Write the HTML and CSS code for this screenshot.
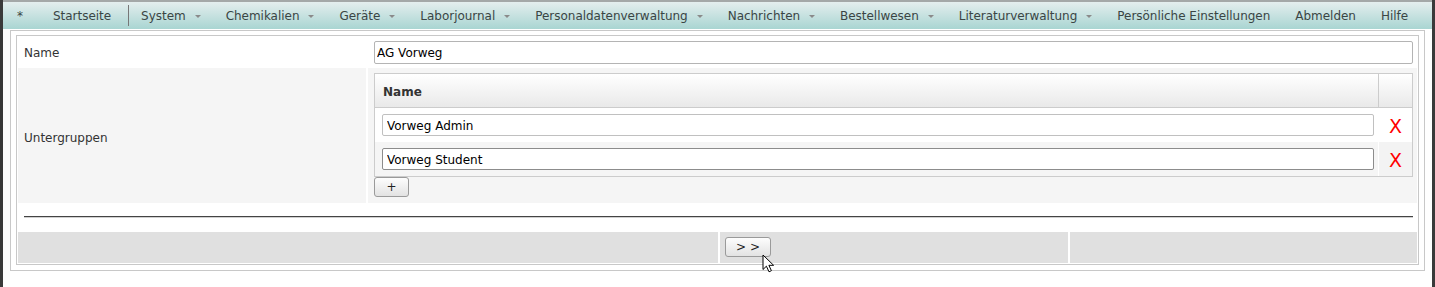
FILE: index.html
```html
<!DOCTYPE html>
<html lang="de">
<head>
  <meta charset="UTF-8">
  <title>Gruppe bearbeiten</title>
  <link rel="stylesheet" href="styles.css">
</head>
<body>

  <div class="frame">

    <!-- Hauptmenü -->
    <nav class="menu">
      <a class="menu-star">*</a>
      <a class="menu-item">Startseite</a>
      <span class="menu-sep"></span>
      <a class="menu-item">System<span class="caret"></span></a>
      <a class="menu-item">Chemikalien<span class="caret"></span></a>
      <a class="menu-item">Geräte<span class="caret"></span></a>
      <a class="menu-item">Laborjournal<span class="caret"></span></a>
      <a class="menu-item">Personaldatenverwaltung<span class="caret"></span></a>
      <a class="menu-item">Nachrichten<span class="caret"></span></a>
      <a class="menu-item">Bestellwesen<span class="caret"></span></a>
      <a class="menu-item">Literaturverwaltung<span class="caret"></span></a>
      <a class="menu-item">Persönliche Einstellungen</a>
      <a class="menu-item">Abmelden</a>
      <a class="menu-item">Hilfe</a>
    </nav>

    <!-- Formular -->
    <div class="panel">
      <form class="panel-inner">

        <div class="field-row">
          <label class="field-label" for="groupName">Name</label>
          <div class="field-value">
            <input class="text" id="groupName" type="text" value="AG Vorweg">
          </div>
        </div>

        <div class="field-row alt">
          <div class="field-label middle">Untergruppen</div>
          <div class="field-value">
            <table class="subtable">
              <thead>
                <tr>
                  <th>Name</th>
                  <th class="col-del"></th>
                </tr>
              </thead>
              <tbody>
                <tr>
                  <td><input class="text sub" type="text" value="Vorweg Admin"></td>
                  <td class="col-del"><a class="del">X</a></td>
                </tr>
                <tr class="alt">
                  <td><input class="text sub focus" type="text" value="Vorweg Student"></td>
                  <td class="col-del"><a class="del">X</a></td>
                </tr>
              </tbody>
            </table>
            <button type="button" class="btn btn-add">+</button>
          </div>
        </div>

        <div class="rule-row"><hr></div>

        <div class="actions">
          <div class="action-cell"></div>
          <div class="action-cell"><button type="button" class="btn btn-next">&gt; &gt;</button></div>
          <div class="action-cell"></div>
        </div>

      </form>
    </div>
  </div>

  <!-- Mauszeiger -->
  <svg class="cursor" width="14" height="20" viewBox="0 0 14 20">
    <path d="M1 1 L1 15.5 L4.4 12.2 L7 17.8 L9.4 16.7 L6.9 11.3 L11.6 11.3 Z" fill="#fff" stroke="#000" stroke-width="1" stroke-linejoin="round"/>
  </svg>

</body>
</html>
```

FILE: styles.css
```css
* {
  box-sizing: border-box;
}

html, body {
  margin: 0;
  height: 100%;
  overflow: hidden;
  background: #fff;
  font-family: "DejaVu Sans", Verdana, sans-serif;
  font-size: 12px;
  color: #333;
}

.frame {
  height: 100%;
  border-left: 3px solid #3a3a3a;
  border-right: 3px solid #3a3a3a;
}

/* Menü */
.menu {
  display: flex;
  height: 29px;
  padding-top: 2px;
  border-top: 2px solid #a4a8a8;
  background: linear-gradient(#e4eeee, #a9d5d2);
  line-height: 25px;
  white-space: nowrap;
}

.menu a {
  color: #3a4545;
  text-decoration: none;
  cursor: pointer;
}

.menu-star {
  padding: 0 17.5px 0 14px;
  color: #888;
}

.menu-item {
  padding: 0 12.5px;
  letter-spacing: -0.03px;
}

.menu-sep {
  width: 1px;
  height: 21px;
  margin: 1px 0 0 4px;
  background: #777;
}

.caret {
  display: inline-block;
  width: 0;
  height: 0;
  margin-left: 9px;
  border-left: 3.5px solid transparent;
  border-right: 3.5px solid transparent;
  border-top: 3px solid #8a8a8a;
  vertical-align: middle;
}

/* Rahmen */
.panel {
  margin: 1px 7px 0 7px;
  padding: 4px 5px 5px 5px;
  border: 1px solid #c8c8c8;
}

.panel-inner {
  display: flex;
  flex-direction: column;
  gap: 2px;
  margin: 0;
  padding: 1px;
  border: 1px solid #c8c8c8;
}

.field-row {
  display: grid;
  grid-template-columns: 348px 1fr;
  column-gap: 2px;
}

.field-row.alt .field-label,
.field-row.alt .field-value {
  background: #f5f5f5;
}

.field-label {
  padding: 5px 6px 1px;
  line-height: 23px;
}

.field-label.middle {
  display: flex;
  align-items: center;
  padding-top: 5px;
  padding-bottom: 0;
}

.field-value {
  padding: 4px 4px 2px 6px;
}

.field-row.alt .field-value {
  padding: 5px 4px 6px 6px;
}

input.text {
  display: block;
  width: 100%;
  height: 23px;
  margin: 0;
  padding: 1px 2px 0;
  border: 1px solid #b4b4b4;
  border-radius: 2px;
  background: #fff;
  font-family: inherit;
  font-size: 12px;
  color: #000;
}

input.sub {
  height: 22px;
  padding: 1px 4px 0;
  border-color: #c0c0c0;
}

input.sub.focus {
  border-color: #8c8c8c;
}

/* Untergruppen-Tabelle */
.subtable {
  width: 100%;
  border-collapse: separate;
  border-spacing: 0;
  border: 1px solid #ccc;
  background: #fff;
}

.subtable th {
  padding: 12px 8px 8px;
  line-height: 13px;
  text-align: left;
  font-weight: bold;
  color: #333;
  background: linear-gradient(#fff, #e9e9e9);
  border-bottom: 1px solid #ccc;
}

.subtable th.col-del {
  width: 34px;
  padding: 0;
  border-left: 1px solid #ccc;
}

.subtable td {
  padding: 6px 4px 6px 7px;
  background: #fff;
}

.subtable tr.alt td {
  background: #f5f5f5;
}

.subtable td.col-del {
  width: 34px;
  padding: 2px 0 0;
  border-left: 1px solid #fff;
  text-align: center;
  vertical-align: middle;
}

.subtable tr.alt td.col-del {
  background: #f3f3f3;
}

.del {
  color: #f00;
  font-size: 19px;
  line-height: 22px;
  cursor: pointer;
}

/* Buttons */
.btn {
  display: block;
  height: 20px;
  margin: 0;
  padding: 0;
  border: 1px solid #9a9a9a;
  border-radius: 3px;
  background: linear-gradient(#fdfdfd, #e2e2e2);
  font-family: inherit;
  font-size: 12px;
  color: #222;
  cursor: pointer;
}

.btn-add {
  width: 35px;
}

.btn-next {
  width: 46px;
}

/* Trennlinie */
.rule-row {
  height: 25px;
  padding: 11px 4px 0 6px;
}

.rule-row hr {
  height: 0;
  margin: 0;
  border: 0;
  border-top: 1px solid #444;
  border-bottom: 1px solid #d0d0d0;
}

/* Aktionen */
.actions {
  display: grid;
  grid-template-columns: 700px 348px 1fr;
  column-gap: 2px;
}

.action-cell {
  height: 31px;
  padding: 5px;
  background: #e0e0e0;
}

.cursor {
  position: absolute;
  left: 762px;
  top: 254px;
}
```
